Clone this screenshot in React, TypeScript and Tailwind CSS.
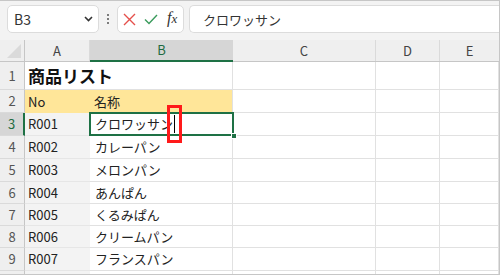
import React from "react"

const font = "font-['Noto_Sans_CJK_JP',sans-serif]"
const grid = "grid grid-cols-[25px_65px_143px_143px_64px_1fr]"

type Row = { n: number; h: string; a: string; b: string }

const rows: Row[] = [
  { n: 3, h: "h-[23px]", a: "R001", b: "クロワッサン" },
  { n: 4, h: "h-[23px]", a: "R002", b: "カレーパン" },
  { n: 5, h: "h-[23px]", a: "R003", b: "メロンパン" },
  { n: 6, h: "h-[22px]", a: "R004", b: "あんぱん" },
  { n: 7, h: "h-[22px]", a: "R005", b: "くるみぱん" },
  { n: 8, h: "h-[22px]", a: "R006", b: "クリームパン" },
  { n: 9, h: "h-[23px]", a: "R007", b: "フランスパン" },
]

const Toolbar = () => (
  <div className="h-[39px] flex items-start pt-[4px] pl-[7px] bg-[#f3f3f3]">
    {/* Name box */}
    <div className="w-[92px] h-[28px] bg-white border border-[#dcdcdc] rounded-[5px] flex items-center justify-between pl-[6px] pr-[5px]">
      <span className="text-[14px] text-[#333] leading-none">B3</span>
      <svg width="9" height="6" viewBox="0 0 9 6" fill="none">
        <path d="M1 1l3.5 3.5L8 1" stroke="#333" strokeWidth="1.6" />
      </svg>
    </div>
    <div className="w-[18px] h-[28px] flex flex-col items-center justify-center gap-[2px]">
      <span className="w-[2px] h-[2px] bg-[#555] rounded-full" />
      <span className="w-[2px] h-[2px] bg-[#555] rounded-full" />
      <span className="w-[2px] h-[2px] bg-[#555] rounded-full" />
    </div>
    {/* Function buttons */}
    <div className="w-[67px] h-[28px] bg-white border border-[#dcdcdc] rounded-[5px] flex items-center pl-[5px] gap-[8px]">
      <svg width="13" height="13" viewBox="0 0 13 13" fill="none">
        <path d="M1 1l11 11M12 1L1 12" stroke="#e5504b" strokeWidth="1.4" />
      </svg>
      <svg width="14" height="11" viewBox="0 0 14 11" fill="none">
        <path d="M1 5.5l4 4L13 1" stroke="#3a9b5c" strokeWidth="1.4" />
      </svg>
      <span className="font-['Liberation_Serif',serif] italic text-[16px] leading-none text-[#333] ml-[1px] -mt-[2px]">
        f<span className="text-[13px]">x</span>
      </span>
    </div>
    <div className="flex-1 h-[28px] ml-[5px] bg-white border border-r-0 border-[#dcdcdc] rounded-l-[5px] flex items-center pl-[13px]">
      <span className="text-[13px] text-[#333] leading-none">クロワッサン</span>
    </div>
  </div>
)

const Header = () => (
  <div className={`${grid} h-[22px] bg-[#efefef] border-b border-[#c6c6c6] text-[13px] text-[#444]`}>
    <div className="relative border-r border-[#c6c6c6]">
      <svg className="absolute right-[3px] bottom-[3px]" width="14" height="14" viewBox="0 0 14 14">
        <path d="M14 0L14 14L0 14Z" fill="#dadada" />
      </svg>
    </div>
    <div className="flex items-center justify-center border-r border-[#dadada]">A</div>
    <div className="flex items-center justify-center bg-[#d6d6d6] text-[#1e6b41] border-b-2 border-[#1e7145] -mb-px">B</div>
    <div className="flex items-center justify-center border-r border-[#dadada]">C</div>
    <div className="flex items-center justify-center border-r border-[#dadada]">D</div>
    <div className="flex items-center justify-center">E</div>
  </div>
)

const RowHead = ({ n, active }: { n?: number; active?: boolean }) => (
  <div
    className={
      active
        ? "flex items-center justify-center bg-[#d6d6d6] text-[#1e6b41] border-r-2 border-[#1e7145] border-b border-b-[#dadada]"
        : "flex items-center justify-center bg-[#efefef] text-[#555] border-r border-[#c6c6c6] border-b border-b-[#dadada]"
    }
  >
    {n}
  </div>
)

const Empty = () => <div className="bg-white border-r border-b border-[#e1e1e1]" />

export default function App() {
  return (
    <div className={`${font} w-[500px] h-[275px] overflow-hidden bg-white border-t border-r border-b border-[#c6c6c6] text-[#222]`}>
      <Toolbar />
      <Header />

      {/* Row 1 */}
      <div className={`${grid} h-[28px] text-[13px]`}>
        <RowHead n={1} />
        <div className="relative z-10 border-b border-[#e1e1e1] flex items-center pl-[3px] whitespace-nowrap">
          <span className="text-[17px] font-bold text-[#111] leading-none">商品リスト</span>
        </div>
        <div className="border-r border-b border-[#e1e1e1]" />
        <Empty />
        <Empty />
        <Empty />
      </div>

      {/* Row 2 */}
      <div className={`${grid} h-[23px] text-[13px]`}>
        <RowHead n={2} />
        <div className="bg-[#ffe699] flex items-center pl-[3px]">No</div>
        <div className="bg-[#ffe699] border-r border-[#e1e1e1] flex items-center pl-[4px]">名称</div>
        <Empty />
        <Empty />
        <Empty />
      </div>

      {rows.map((r) => (
        <div key={r.n} className={`${grid} ${r.h} text-[13px]`}>
          <RowHead n={r.n} active={r.n === 3} />
          <div className="bg-[#f3f3f3] border-b border-[#e6e6e6] flex items-center pl-[3px]">{r.a}</div>
          <div className="relative bg-white border-r border-b border-[#e1e1e1] flex items-center pl-[5px]">
            {r.n === 3 ? (
              <>
                <span>{r.b}</span>
                <span className="relative inline-block w-px h-[18px] bg-black ml-[1px]" />
                <span className="absolute z-10 -left-px -top-px -right-[2px] -bottom-px border-2 border-[#1e7145] pointer-events-none" />
                <span className="absolute z-10 -right-[5px] -bottom-[4px] w-[6px] h-[6px] bg-[#1e7145] border border-white" />
                <span className="absolute z-20 left-[77px] -top-[8px] w-[15px] h-[38px] border-[3px] border-[#ff1a1a]" />
              </>
            ) : (
              <span>{r.b}</span>
            )}
          </div>
          <Empty />
          <Empty />
          <Empty />
        </div>
      ))}

      {/* Row 10 (partial) */}
      <div className={`${grid} h-[23px] text-[13px]`}>
        <RowHead />
        <div className="bg-[#f3f3f3]" />
        <Empty />
        <Empty />
        <Empty />
        <Empty />
      </div>
    </div>
  )
}
